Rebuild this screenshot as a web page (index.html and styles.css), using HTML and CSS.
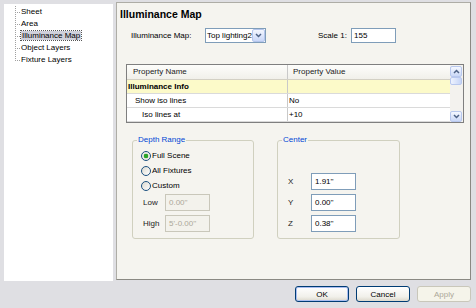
FILE: index.html
```html
<!DOCTYPE html>
<html lang="en">

<head>
    <meta charset="UTF-8">
    <title>Illuminance Map</title>
    <link rel="stylesheet" href="styles.css">
</head>

<body>
    <div class="main">
        <div class="tree">
            <ul class="tree-list">
                <li>Sheet</li>
                <li>Area</li>
                <li><span class="selected">Illuminance Map</span></li>
                <li>Object Layers</li>
                <li>Fixture Layers</li>
            </ul>
        </div>

        <div class="panel">
            <div class="panel-title">Illuminance Map</div>

            <div class="map-row">
                <span class="map-label">Illuminance Map:</span>
                <div class="select">
                    <span class="select-text">Top lighting2</span>
                    <span class="select-btn">
                        <svg width="7" height="5" viewBox="0 0 7 5"><path d="M1 1 L3.5 3.5 L6 1" fill="none" stroke="#4d6185" stroke-width="1.5"/></svg>
                    </span>
                </div>
                <span class="scale-label">Scale 1:</span>
                <div class="field scale-field">155</div>
            </div>

            <div class="grid">
                <div class="grid-body">
                    <div class="grid-row grid-head">
                        <div class="cell name head-name">Property Name</div>
                        <div class="cell value head-value">Property Value</div>
                    </div>
                    <div class="grid-row category">
                        <div class="cell name">Illuminance Info</div>
                        <div class="cell value"></div>
                    </div>
                    <div class="grid-row">
                        <div class="cell name indent-1">Show iso lines</div>
                        <div class="cell value">No</div>
                    </div>
                    <div class="grid-row">
                        <div class="cell name indent-2">Iso lines at</div>
                        <div class="cell value">+10</div>
                    </div>
                </div>
                <div class="scrollbar">
                    <span class="sb-btn">
                        <svg width="7" height="5" viewBox="0 0 7 5"><path d="M1 4 L3.5 1.5 L6 4" fill="none" stroke="#4d6185" stroke-width="1.5"/></svg>
                    </span>
                    <span class="sb-thumb"></span>
                    <span class="sb-track"></span>
                    <span class="sb-btn">
                        <svg width="7" height="5" viewBox="0 0 7 5"><path d="M1 1 L3.5 3.5 L6 1" fill="none" stroke="#4d6185" stroke-width="1.5"/></svg>
                    </span>
                </div>
            </div>

            <div class="groups">
                <fieldset class="group depth">
                    <legend>Depth Range</legend>
                    <div class="radio-list">
                        <div class="radio-row"><span class="radio checked"></span>Full Scene</div>
                        <div class="radio-row"><span class="radio"></span>All Fixtures</div>
                        <div class="radio-row"><span class="radio"></span>Custom</div>
                    </div>
                    <div class="field-row first-field">
                        <span class="field-label depth-label">Low</span>
                        <div class="field disabled">0.00''</div>
                    </div>
                    <div class="field-row">
                        <span class="field-label depth-label">High</span>
                        <div class="field disabled">5'-0.00''</div>
                    </div>
                </fieldset>

                <fieldset class="group center">
                    <legend>Center</legend>
                    <div class="center-fields">
                        <div class="field-row">
                            <span class="field-label">X</span>
                            <div class="field">1.91''</div>
                        </div>
                        <div class="field-row">
                            <span class="field-label">Y</span>
                            <div class="field">0.00''</div>
                        </div>
                        <div class="field-row">
                            <span class="field-label">Z</span>
                            <div class="field">0.38''</div>
                        </div>
                    </div>
                </fieldset>
            </div>
        </div>
    </div>

    <div class="buttons">
        <button type="button" class="btn btn-default">OK</button>
        <button type="button" class="btn">Cancel</button>
        <button type="button" class="btn" disabled>Apply</button>
    </div>
</body>

</html>
```

FILE: styles.css
```css
* {
    box-sizing: border-box;
}

body {
    margin: 0;
    background: #dfdfe3;
    font-family: "Liberation Sans", Arial, sans-serif;
    font-size: 8px;
    color: #000;
}

.main {
    display: flex;
    align-items: flex-start;
    padding: 2px 0 0 4px;
}

/* tree on the left */
.tree {
    margin-top: 2px;
    width: 109px;
    height: 277px;
    background: #fff;
}

.tree-list {
    list-style: none;
    margin: 0 0 0 11px;
    padding: 2px 0 0 0;
}

.tree-list li {
    height: 12px;
    line-height: 12px;
    padding-left: 6px;
    white-space: nowrap;
    background:
        repeating-linear-gradient(to bottom, #a0a0a0 0 1px, transparent 1px 2px) 0 0 / 1px 100% no-repeat,
        repeating-linear-gradient(to right, #a0a0a0 0 1px, transparent 1px 2px) 0 6px / 6px 1px no-repeat;
}

.tree-list li:last-child {
    background:
        repeating-linear-gradient(to bottom, #a0a0a0 0 1px, transparent 1px 2px) 0 0 / 1px 7px no-repeat,
        repeating-linear-gradient(to right, #a0a0a0 0 1px, transparent 1px 2px) 0 6px / 6px 1px no-repeat;
}

.tree-list .selected {
    padding: 0 1px;
    background: #cfd0db;
    outline: 1px dotted #555;
}

/* property page */
.panel {
    margin-left: 3px;
    width: 355px;
    height: 278px;
    background: #f5f4ef;
    border: 1px solid #aeada6;
    border-right-color: #8a8983;
    border-bottom-color: #8a8983;
}

.panel-title {
    padding: 5px 0 0 3px;
    font-size: 10.5px;
    font-weight: bold;
    line-height: 13px;
}

.map-row {
    display: flex;
    align-items: center;
    height: 15px;
    margin-top: 7px;
    padding-left: 14px;
}

.map-label {
    width: 74px;
}

.select {
    display: flex;
    width: 61px;
    height: 15px;
    background: #fff;
    border: 1px solid #7f9db9;
}

.select-text {
    flex: 1;
    padding-left: 1px;
    line-height: 13px;
    overflow: hidden;
    white-space: nowrap;
}

.select-btn {
    display: flex;
    justify-content: center;
    align-items: center;
    width: 13px;
    height: 13px;
    background: linear-gradient(#f3f6fe, #c9d7f8);
    border: 1px solid #b4c5ec;
    border-radius: 2px;
}

.scale-label {
    width: 33px;
    margin-left: 52px;
}

.field {
    width: 45px;
    height: 17px;
    padding-left: 3px;
    line-height: 15px;
    background: #fff;
    border: 1px solid #7f9db9;
    white-space: nowrap;
    overflow: hidden;
}

.scale-field {
    height: 15px;
    line-height: 13px;
    padding-left: 2px;
}

.field.disabled {
    background: #f3f2ec;
    border-color: #c9c7ba;
    color: #aca899;
}

/* property grid */
.grid {
    display: flex;
    width: 338px;
    height: 59px;
    margin: 21px 0 0 9px;
    background: #fff;
    border: 1px solid #7f7f7f;
}

.grid-body {
    flex: 1;
}

.grid-row {
    display: flex;
    height: 14px;
    line-height: 13px;
    border-bottom: 1px solid #dadada;
}

.cell {
    white-space: nowrap;
    overflow: hidden;
}

.cell.name {
    width: 161px;
    padding-left: 1px;
    border-right: 1px solid #c9c9c9;
}

.cell.value {
    flex: 1;
    padding-left: 1px;
}

.grid-head {
    height: 15px;
    line-height: 14px;
    background: linear-gradient(#fdfdfb, #f1f0ea);
    border-bottom-color: #d3d0c4;
}

.grid-head .head-name {
    padding-left: 6px;
    color: #222;
}

.grid-head .head-value {
    padding-left: 5px;
    color: #222;
}

.category {
    background: #fcfac9;
    font-weight: bold;
}

.indent-1 {
    padding-left: 8px !important;
}

.indent-2 {
    padding-left: 15px !important;
}

.scrollbar {
    display: flex;
    flex-direction: column;
    width: 13px;
    padding: 1px 1px 0 0;
    background: #f3f2ee;
}

.sb-btn {
    display: flex;
    justify-content: center;
    align-items: center;
    height: 11px;
    background: linear-gradient(#f5f8ff, #cad8f7);
    border: 1px solid #b8c8ee;
    border-radius: 2px;
}

.sb-thumb {
    height: 8px;
    background: linear-gradient(to right, #eef3fe, #c6d5f7);
    border: 1px solid #b8c8ee;
    border-radius: 2px;
}

.sb-track {
    flex: 1;
}

/* group boxes */
.groups {
    display: flex;
    gap: 23px;
    margin: 12px 0 0 15px;
}

.group {
    margin: 0;
    padding: 0;
    height: 104px;
    border: 1px solid #d0d0bf;
    border-radius: 3px;
}

.group.depth {
    width: 122px;
}

.group.center {
    width: 123px;
}

.group legend {
    margin-left: 4px;
    padding: 0 1px;
    line-height: 10px;
    color: #0046d5;
}

.radio-list {
    padding-top: 3px;
}

.radio-row {
    display: flex;
    align-items: center;
    gap: 1px;
    height: 15px;
    padding-left: 8px;
}

.radio {
    width: 10px;
    height: 10px;
    border: 1px solid #1c5180;
    border-radius: 50%;
    background: linear-gradient(135deg, #dcdad0, #fff);
}

.radio.checked {
    background: radial-gradient(circle, #2aa52a 0 2px, #e6e5de 2.6px, #fff 100%);
}

.field-row {
    display: flex;
    align-items: center;
    height: 17px;
    margin-top: 4px;
    padding-left: 10px;
}

.field-row.first-field {
    margin-top: 1px;
}

.field-label {
    width: 23px;
    color: #222;
}

.depth-label {
    width: 22px;
}

.center-fields {
    padding-top: 24px;
}

/* dialog buttons */
.buttons {
    display: flex;
    justify-content: flex-end;
    gap: 7px;
    margin-top: 5px;
    padding-right: 5px;
}

.btn {
    width: 54px;
    height: 16px;
    padding: 0;
    font-family: "Liberation Sans", Arial, sans-serif;
    font-size: 8px;
    color: #000;
    background: linear-gradient(#ffffff, #f1f0ea 70%, #dcd8cc);
    border: 1px solid #003c74;
    border-radius: 3px;
}

.btn-default {
    box-shadow: inset 0 0 0 1px #a9bdf0;
}

.btn:disabled {
    color: #aca899;
    background: #f5f4ea;
    border-color: #c9c7ba;
}
```
